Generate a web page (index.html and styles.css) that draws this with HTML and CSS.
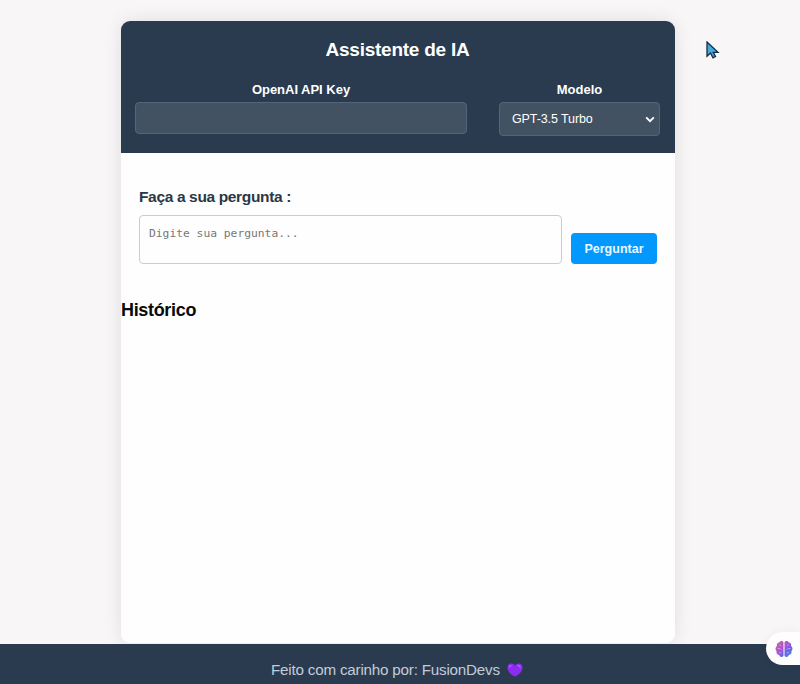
FILE: index.html
```html
<!DOCTYPE html>
<html lang="pt-BR">
<head>
<meta charset="utf-8">
<title>Assistente de IA</title>
<link rel="stylesheet" href="styles.css">
</head>
<body>
<main class="card">
  <header class="header">
    <h1 class="title">Assistente de IA</h1>
    <div class="settings">
      <div class="field key-field">
        <label for="key"><span class="key-label">OpenAI API Key</span></label>
        <input id="key" class="control" type="password">
      </div>
      <div class="field model-field">
        <label for="model"><span class="model-label">Modelo</span></label>
        <div class="control select" id="model"><span class="model-value">GPT-3.5 Turbo</span>
          <svg width="10" height="7" viewBox="0 0 10 7"><path d="M1.2 1.3 5 5.1 8.8 1.3" fill="none" stroke="#fff" stroke-width="1.9"/></svg>
        </div>
      </div>
    </div>
  </header>
  <section class="ask">
    <label class="ask-label" for="question"><span class="ask-text">Faça a sua pergunta :</span></label>
    <div class="ask-row">
      <textarea id="question" class="question" placeholder="Digite sua pergunta..."></textarea>
      <button class="send"><span class="send-text">Perguntar</span></button>
    </div>
  </section>
  <h2 class="history"><span>Histórico</span></h2>
</main>
<footer class="footer">
  <span class="credit">Feito com carinho por: FusionDevs</span>
  <svg class="heart" width="16" height="14" viewBox="0 0 16 14"><path d="M8 13.6C5 12.2.5 9.200.5 4.500.5 2.200 2 .6 4.100.6 5.900.6 7.200 1.400 8 2.800 8.800 1.400 10.100.6 11.900.6 14 .6 15.500 2.200 15.500 4.500 15.500 9.200 11 12.200 8 13.600Z" fill="#8b2cf0"/><path d="M2.500 4.500C2.500 3.200 3.400 2.500 4.500 2.700M10.500 2.800C12 2.200 13.200 3.200 13 4.900" fill="none" stroke="#b45cff" stroke-width="1.500"/></svg>
</footer>
<div class="widget">
  <svg width="18" height="18" viewBox="0 0 18 18">
    <defs><linearGradient id="g" x1="0" y1="0" x2="1" y2="1"><stop offset="0" stop-color="#b87591"/><stop offset=".4" stop-color="#b64fd0"/><stop offset=".65" stop-color="#6d62ec"/><stop offset="1" stop-color="#2d8cf5"/></linearGradient></defs>
    <path d="M8.500 2.200C7.500.3 4.700.7 4.200 2.600 2.300 2.700 1.300 4.500 2 6 .2 7 0 9.800 1.500 11 1 13 2.400 14.800 4.200 14.900 5 17.400 7.700 17.600 8.500 15.800ZM9.500 2.200C10.500.3 13.300.7 13.800 2.600 15.700 2.700 16.700 4.500 16 6 17.800 7 18 9.800 16.500 11 17 13 15.600 14.800 13.800 14.900 13 17.400 10.300 17.600 9.500 15.800Z" fill="url(#g)"/>
    <path d="M4.300 4.500 6 5.800M2.500 8.500H5L6.500 10M4 12.500 6.300 12.800M13.700 4.500 12 5.800M15.500 8.500H13L11.500 10M14 12.500 11.700 12.800" fill="none" stroke="#d9c7ff" stroke-width=".8" opacity=".75"/>
  </svg>
</div>
<svg class="cursor" width="14" height="19" viewBox="0 0 14 19"><path d="M1 1V15.300L4.500 12 7 16.800 9.500 15.500 7.300 11.300H12Z" fill="#45a9dc" stroke="#152b40" stroke-width="1.300"/></svg>
</body>
</html>
```
FILE: styles.css
```css
* { box-sizing: border-box; }
body {
  margin: 0;
  height: 684px;
  padding-top: 21px;
  overflow: hidden;
  background: #f8f6f7;
  font-family: "Liberation Sans", Arial, sans-serif;
  display: flex;
  flex-direction: column;
}
.card {
  width: 554px;
  height: 622px;
  margin: 0 0 1px 121px;
  background: #fefefe;
  border-radius: 9px;
  box-shadow: 0 0 18px rgba(0, 0, 0, .1);
}
.header {
  height: 132px;
  padding: 17px 15px 0 14px;
  background: #2a3b4f;
  border-radius: 9px 9px 0 0;
  color: #fff;
}
.title {
  margin: 0;
  font-size: 19px;
  line-height: 24px;
  letter-spacing: -.25px;
  text-align: center;
}
.settings {
  display: flex;
  justify-content: space-between;
  margin-top: 18px;
}
.field label {
  display: block;
  height: 22px;
  line-height: 20px;
  font-size: 13px;
  font-weight: bold;
  letter-spacing: -.02px;
  text-align: center;
}
.key-field { width: 332px; }
.model-field { width: 161px; }
.control {
  display: block;
  width: 100%;
  height: 32px;
  border: 1px solid #53657b;
  border-radius: 4px;
  background: #435263;
}
.select {
  display: flex;
  align-items: center;
  justify-content: space-between;
  height: 34px;
  padding: 0 4px 0 12px;
  font-size: 12.500px;
  letter-spacing: -.1px;
}
.ask { padding: 35px 18px 0; }
.ask-label {
  display: block;
  height: 27px;
  line-height: 18px;
  font-size: 15.500px;
  letter-spacing: -.35px;
  font-weight: bold;
  color: #2a3845;
}
.ask-row {
  display: flex;
  align-items: flex-end;
  justify-content: space-between;
}
.question {
  width: 423px;
  height: 49px;
  padding: 10px 9px;
  border: 1px solid #ccc;
  border-radius: 4px;
  background: #fefefe;
  font: 11.300px/15px "DejaVu Sans Mono", monospace;
  resize: none;
}
.question::placeholder { color: #777; }
.send {
  width: 86px;
  height: 31px;
  padding: 0;
  border: 0;
  border-radius: 4px;
  background: #0398fe;
  color: #e9f8ff;
  font: bold 12.500px "Liberation Sans", Arial, sans-serif;
}
.history {
  margin: 35px 0 0;
  font-size: 18px;
  line-height: 22px;
  letter-spacing: -.33px;
  color: #080a0c;
}
.footer {
  height: 40px;
  padding: 11px 0 0 271px;
  display: flex;
  align-items: flex-start;
  gap: 7px;
  background: #2a3b4f;
  color: #c3ccd7;
  font-size: 15.200px;
  letter-spacing: -.2px;
  line-height: 30px;
}
.credit { white-space: nowrap; }
.heart { margin-top: 8px; }
.widget {
  position: absolute;
  right: 0;
  top: 632px;
  width: 34px;
  height: 33px;
  padding: 8px 0 0 9px;
  border-radius: 17px 0 0 17px;
  background: #fefefe;
  box-shadow: 0 0 10px rgba(0, 0, 0, .05);
}
.cursor {
  position: absolute;
  left: 706px;
  top: 41px;
}
```
